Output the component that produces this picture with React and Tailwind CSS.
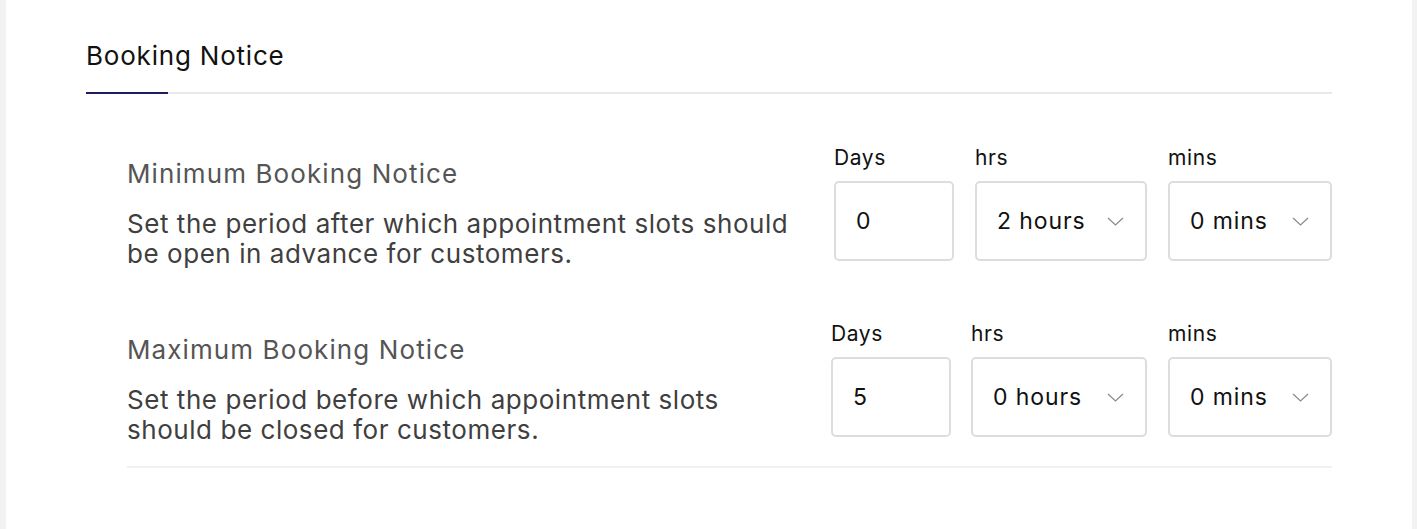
import React from 'react';

const Chevron = () => (
  <svg width="17" height="9" viewBox="0 0 17 9" fill="none" className="shrink-0">
    <path d="M1 1l7.5 7L16 1" stroke="#8a8a8a" strokeWidth="1.2" />
  </svg>
);

const Field = ({ label, width, value, select }) => (
  <div className="flex flex-col" style={{ width }}>
    <span className="text-[21px] leading-[24px] tracking-[0.6px] text-[#111]">{label}</span>
    <div
      className={`mt-[11px] h-[80px] rounded-[5px] border-2 border-[#dddddd] flex items-center justify-between pl-[20px] ${
        select ? 'pr-[21px]' : 'pr-3'
      }`}
    >
      <span className="text-[23px] tracking-[0.9px] text-[#111]">{value}</span>
      {select && <Chevron />}
    </div>
  </div>
);

const NoticeRow = ({ title, desc, fields, gapA, gapB }) => (
  <div className="flex justify-between items-start">
    <div className="pt-[13px] w-[684px]">
      <p className="text-[26px] leading-[30px] tracking-[1.1px] text-[#555]">{title}</p>
      <p className="mt-[20px] text-[26px] leading-[30px] tracking-[0.55px] text-[#3f3f3f]">{desc}</p>
    </div>
    <div className="flex">
      <Field {...fields[0]} />
      <div style={{ width: gapA }} />
      <Field {...fields[1]} select />
      <div style={{ width: gapB }} />
      <Field {...fields[2]} select />
    </div>
  </div>
);

export default function App() {
  return (
    <div className="flex h-[529px] bg-[#f2f2f2] pl-[6px] pr-[5px]" style={{ fontFamily: 'Inter, "Noto Sans", sans-serif' }}>
      <div className="flex-1 bg-white px-[80px] pt-[40px]">
        {/* Tab header */}
        <div>
          <h2 className="text-[26px] leading-[32px] tracking-[0.8px] text-[#111] font-normal">Booking Notice</h2>
          <div className="mt-[20px] h-[2px] bg-[#e8e8e8]">
            <div className="w-[82px] h-[2px] bg-[#1e1b5e]" />
          </div>
        </div>

        <div className="pl-[41px] pt-[52px]">
          <NoticeRow
            title="Minimum Booking Notice"
            desc="Set the period after which appointment slots should be open in advance for customers."
            gapA={21}
            gapB={21}
            fields={[
              { label: 'Days', width: 120, value: '0' },
              { label: 'hrs', width: 172, value: '2 hours' },
              { label: 'mins', width: 164, value: '0 mins' },
            ]}
          />
          <div className="h-[53px]" />
          <NoticeRow
            title="Maximum Booking Notice"
            desc="Set the period before which appointment slots should be closed for customers."
            gapA={20}
            gapB={21}
            fields={[
              { label: 'Days', width: 120, value: '5' },
              { label: 'hrs', width: 176, value: '0 hours' },
              { label: 'mins', width: 164, value: '0 mins' },
            ]}
          />
          <div className="mt-[21px] h-[2px] bg-[#f0f0f5]" />
        </div>
      </div>
    </div>
  );
}
